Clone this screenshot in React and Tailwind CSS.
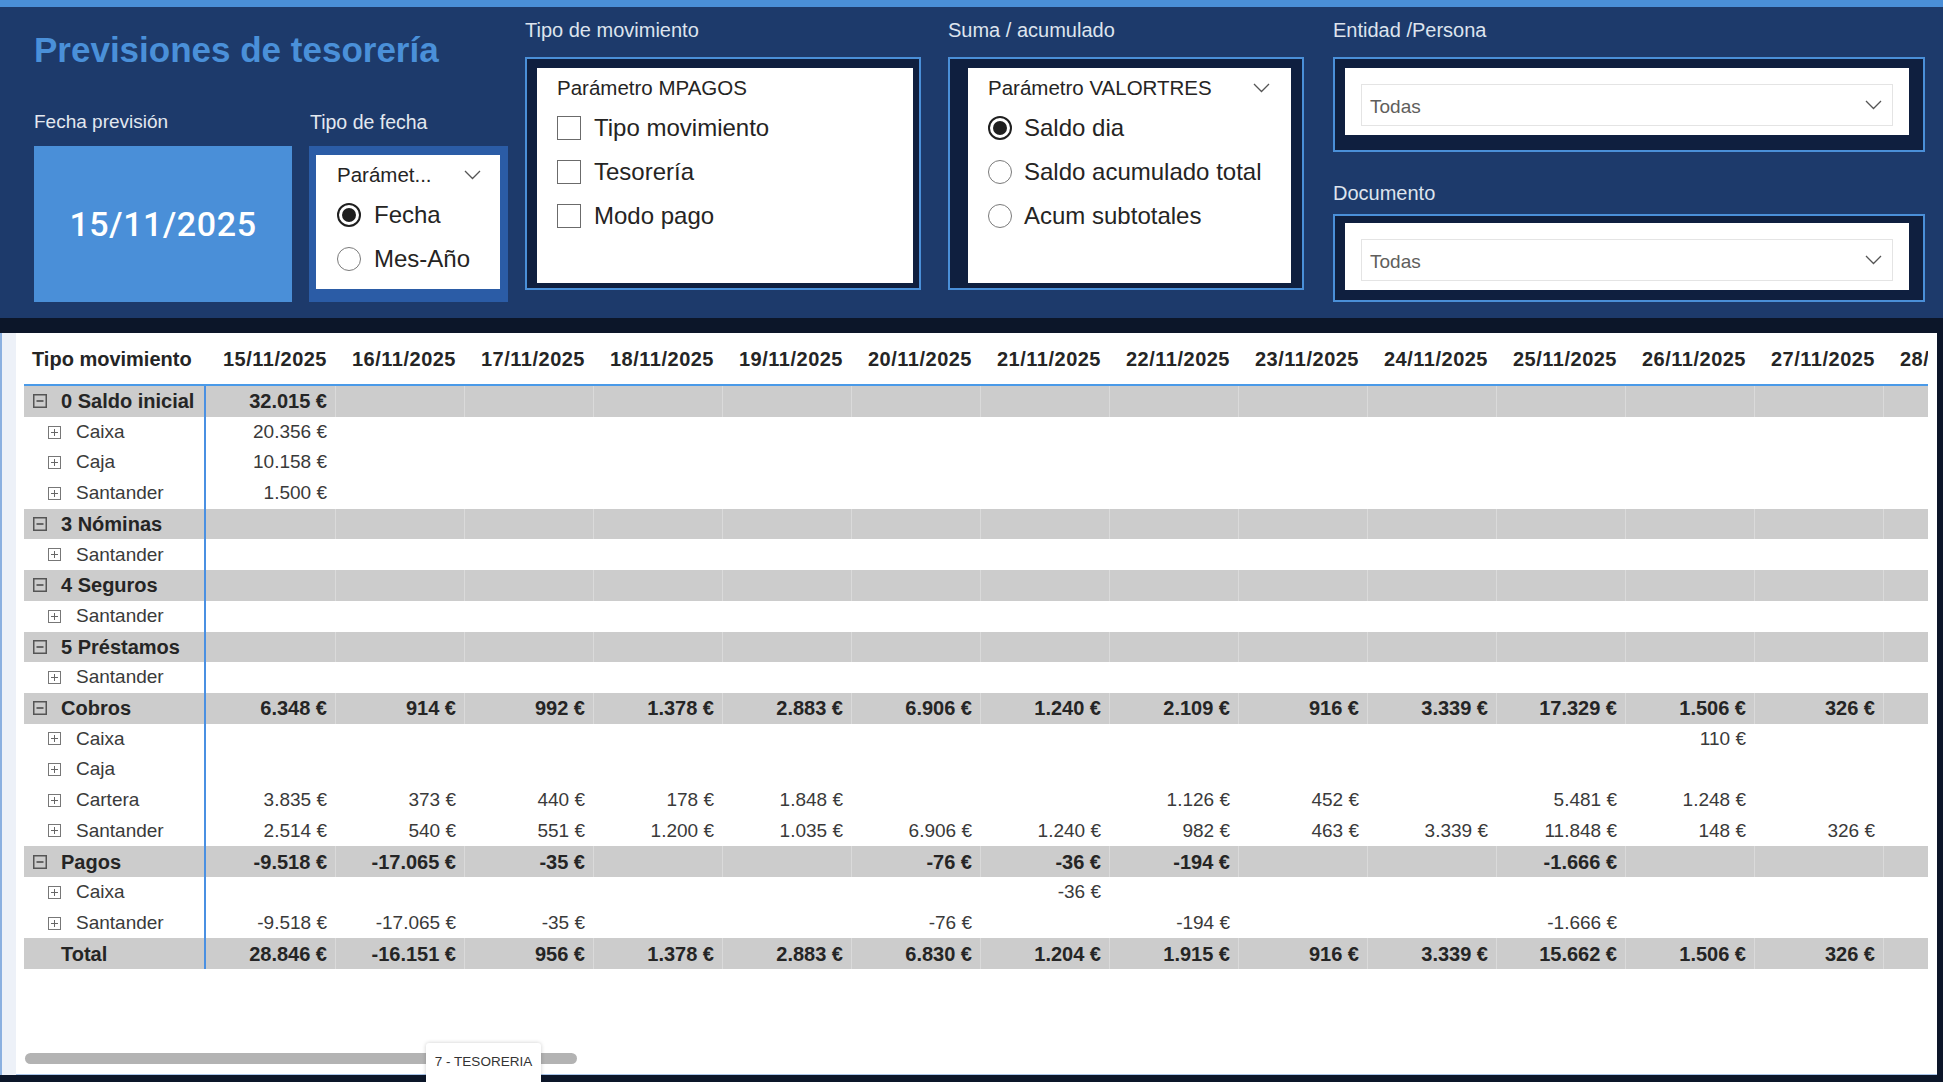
import React from 'react';

const dates = [
    '15/11/2025', '16/11/2025', '17/11/2025', '18/11/2025', '19/11/2025', '20/11/2025', '21/11/2025',
    '22/11/2025', '23/11/2025', '24/11/2025', '25/11/2025', '26/11/2025', '27/11/2025', '28/11/2025',
];

const rows = [
    { label: '0 Saldo inicial', type: 'group', values: ['32.015 €'] },
    { label: 'Caixa', type: 'child', values: ['20.356 €'] },
    { label: 'Caja', type: 'child', values: ['10.158 €'] },
    { label: 'Santander', type: 'child', values: ['1.500 €'] },
    { label: '3 Nóminas', type: 'group', values: [] },
    { label: 'Santander', type: 'child', values: [] },
    { label: '4 Seguros', type: 'group', values: [] },
    { label: 'Santander', type: 'child', values: [] },
    { label: '5 Préstamos', type: 'group', values: [] },
    { label: 'Santander', type: 'child', values: [] },
    { label: 'Cobros', type: 'group', values: ['6.348 €', '914 €', '992 €', '1.378 €', '2.883 €', '6.906 €', '1.240 €', '2.109 €', '916 €', '3.339 €', '17.329 €', '1.506 €', '326 €'] },
    { label: 'Caixa', type: 'child', values: ['', '', '', '', '', '', '', '', '', '', '', '110 €'] },
    { label: 'Caja', type: 'child', values: [] },
    { label: 'Cartera', type: 'child', values: ['3.835 €', '373 €', '440 €', '178 €', '1.848 €', '', '', '1.126 €', '452 €', '', '5.481 €', '1.248 €'] },
    { label: 'Santander', type: 'child', values: ['2.514 €', '540 €', '551 €', '1.200 €', '1.035 €', '6.906 €', '1.240 €', '982 €', '463 €', '3.339 €', '11.848 €', '148 €', '326 €'] },
    { label: 'Pagos', type: 'group', values: ['-9.518 €', '-17.065 €', '-35 €', '', '', '-76 €', '-36 €', '-194 €', '', '', '-1.666 €'] },
    { label: 'Caixa', type: 'child', values: ['', '', '', '', '', '', '-36 €'] },
    { label: 'Santander', type: 'child', values: ['-9.518 €', '-17.065 €', '-35 €', '', '', '-76 €', '', '-194 €', '', '', '-1.666 €'] },
    { label: 'Total', type: 'total', values: ['28.846 €', '-16.151 €', '956 €', '1.378 €', '2.883 €', '6.830 €', '1.204 €', '1.915 €', '916 €', '3.339 €', '15.662 €', '1.506 €', '326 €'] },
];

function Chevron() {
    return (
        <svg width="17" height="10" viewBox="0 0 17 10" className="shrink-0">
            <polyline points="1,1 8.5,8.5 16,1" fill="none" stroke="#555" strokeWidth="1.3" />
        </svg>
    );
}

function Radio({ checked }) {
    return (
        <span
            className={`w-[24px] h-[24px] rounded-full flex items-center justify-center shrink-0 ${checked ? 'border-2 border-[#1f1f1f]' : 'border-[1.5px] border-[#7a7a7a]'}`}
        >
            {checked && <span className="w-[14px] h-[14px] rounded-full bg-[#1f1f1f]" />}
        </span>
    );
}

function Checkbox() {
    return <span className="w-[24px] h-[24px] border-[1.5px] border-[#6b6b6b] shrink-0" />;
}

function ExpandIcon({ plus }) {
    if (plus) {
        return (
            <svg width="13" height="13" viewBox="0 0 13 13" className="shrink-0">
                <rect x="0.5" y="0.5" width="12" height="12" fill="none" stroke="#777" />
                <line x1="3" y1="6.5" x2="10" y2="6.5" stroke="#666" />
                <line x1="6.5" y1="3" x2="6.5" y2="10" stroke="#666" />
            </svg>
        );
    }
    return (
        <svg width="14" height="14" viewBox="0 0 14 14" className="shrink-0">
            <rect x="0.75" y="0.75" width="12.5" height="12.5" fill="none" stroke="#555" strokeWidth="1.5" />
            <line x1="3.5" y1="7" x2="10.5" y2="7" stroke="#444" strokeWidth="1.5" />
        </svg>
    );
}

function Label({ children, className = '' }) {
    return <div className={`h-[24px] leading-[24px] text-[20px] text-[#dde4ee] whitespace-nowrap ${className}`}>{children}</div>;
}

function Dropdown() {
    return (
        <div className="h-full border border-[#e4e4e4] flex items-center justify-between pl-[8px] pr-[10px]">
            <span className="pt-[5px] text-[19px] text-[#605e5c]">Todas</span>
            <Chevron />
        </div>
    );
}

function TableRow({ row }) {
    const gray = row.type !== 'child';
    const bold = row.type !== 'child';
    return (
        <div className={`flex h-[30.7px] ${gray ? 'bg-[#cccccc]' : ''} ${bold ? 'font-bold text-[20px] text-[#252525]' : 'text-[19px] text-[#3a3a3a]'}`}>
            <div className={`w-[182px] shrink-0 border-r-2 border-[#4a90e2] flex items-center whitespace-nowrap ${row.type === 'child' ? 'pl-[24px] gap-[15px]' : 'pl-[9px] gap-[14px]'}`}>
                {row.type === 'group' && <ExpandIcon />}
                {row.type === 'child' && <ExpandIcon plus />}
                {row.type === 'total' && <span className="w-[14px]" />}
                <span>{row.label}</span>
            </div>
            {dates.map((d, i) => (
                <div
                    key={d}
                    className={`w-[129px] shrink-0 flex items-center justify-end pr-[8px] whitespace-nowrap ${gray && i > 0 ? 'border-l border-[#dadada]' : ''}`}
                >
                    {row.values[i] || ''}
                </div>
            ))}
        </div>
    );
}

export default function App() {
    return (
        <div className="relative w-[1943px] h-[1082px] overflow-hidden bg-[#0c1629] font-['Liberation_Sans',Arial,sans-serif]">
            <div className="h-[7px] bg-[#4a8fd8]" />

            {/* header with slicers */}
            <div className="h-[311px] bg-[#1d3a6b] flex pl-[34px]">
                <div className="w-[474px] shrink-0 flex flex-col">
                    <h1 className="mt-[23px] h-[40px] leading-[40px] text-[35px] font-bold text-[#4a90d9] whitespace-nowrap">
                        Previsiones de tesorería
                    </h1>
                    <div className="mt-[40px] flex gap-[17px]">
                        <div className="w-[258px] shrink-0">
                            <div className="h-[24px] leading-[24px] text-[19px] text-[#e3e8f0]">Fecha previsión</div>
                            <div className="mt-[12px] h-[156px] bg-[#4a8fd8] flex items-center justify-center text-white text-[34px] font-medium font-['Roboto',sans-serif] tracking-[0.6px]">
                                15/11/2025
                            </div>
                        </div>
                        <div className="w-[199px] shrink-0">
                            <div className="h-[24px] leading-[24px] text-[19.5px] text-[#e3e8f0] pl-[1px]">Tipo de fecha</div>
                            <div className="mt-[12px] h-[156px] bg-[#2b5ca6] pt-[9px] pl-[7px] pr-[8px] pb-[13px]">
                                <div className="h-full bg-white pl-[21px] pr-[19px] text-[#252423]">
                                    <div className="h-[38px] pt-[2px] flex items-center justify-between text-[20.5px]">
                                        <span>Parámet...</span>
                                        <Chevron />
                                    </div>
                                    <div className="h-[44px] flex items-center gap-[13px] text-[24px]">
                                        <Radio checked />
                                        <span>Fecha</span>
                                    </div>
                                    <div className="h-[44px] flex items-center gap-[13px] text-[24px]">
                                        <Radio />
                                        <span>Mes-Año</span>
                                    </div>
                                </div>
                            </div>
                        </div>
                    </div>
                </div>

                <div className="ml-[17px] w-[396px] shrink-0">
                    <Label className="mt-[11px]">Tipo de movimiento</Label>
                    <div className="mt-[15px] h-[233px] border-2 border-[#4a8fd8] bg-[#0f1f3f] pl-[10px] pt-[9px] pr-[6px] pb-[5px]">
                        <div className="h-full bg-white pl-[20px] text-[#252423]">
                            <div className="h-[38px] pt-[2px] flex items-center text-[20.5px]">Parámetro MPAGOS</div>
                            {['Tipo movimiento', 'Tesorería', 'Modo pago'].map((t) => (
                                <div key={t} className="h-[44px] flex items-center gap-[13px] text-[24px]">
                                    <Checkbox />
                                    <span>{t}</span>
                                </div>
                            ))}
                        </div>
                    </div>
                </div>

                <div className="ml-[27px] w-[356px] shrink-0">
                    <Label className="mt-[11px]">Suma / acumulado</Label>
                    <div className="mt-[15px] h-[233px] border-2 border-[#4a8fd8] bg-[#0f1f3f] pl-[18px] pt-[9px] pr-[11px] pb-[5px]">
                        <div className="h-full bg-white pl-[20px] pr-[21px] text-[#252423]">
                            <div className="h-[38px] pt-[2px] flex items-center justify-between text-[20.5px]">
                                <span>Parámetro VALORTRES</span>
                                <Chevron />
                            </div>
                            {[['Saldo dia', true], ['Saldo acumulado total', false], ['Acum subtotales', false]].map(([t, c]) => (
                                <div key={t} className="h-[44px] flex items-center gap-[12px] text-[24px] whitespace-nowrap">
                                    <Radio checked={c} />
                                    <span>{t}</span>
                                </div>
                            ))}
                        </div>
                    </div>
                </div>

                <div className="ml-[29px] w-[592px] shrink-0">
                    <Label className="mt-[11px]">Entidad /Persona</Label>
                    <div className="mt-[15px] h-[95px] border-2 border-[#4a8fd8] bg-[#0f1f3f] pl-[10px] pt-[9px] pr-[14px] pb-[15px]">
                        <div className="h-full bg-white pt-[16px] pb-[9px] px-[16px]">
                            <Dropdown />
                        </div>
                    </div>
                    <Label className="mt-[29px]">Documento</Label>
                    <div className="mt-[9px] h-[88px] border-2 border-[#4a8fd8] bg-[#0f1f3f] pl-[10px] pt-[7px] pr-[14px] pb-[10px]">
                        <div className="h-full bg-white pt-[16px] pb-[9px] px-[16px]">
                            <Dropdown />
                        </div>
                    </div>
                </div>
            </div>

            <div className="h-[15px]" />

            {/* matrix */}
            <div className="flex h-[742px]">
                <div className="w-[16px] shrink-0 bg-[#edf1f8] border-l-2 border-[#8bb0e0]" />
                <div className="w-[1921px] shrink-0 bg-white flex flex-col pt-[6px] border-b border-[#a9c4e8]">
                    <div className="ml-[8px] w-[1904px] overflow-hidden">
                        <div className="flex h-[47px] border-b-2 border-[#4a9ae8] pt-[8px] font-bold text-[20px] text-[#252525] leading-[24px]">
                            <div className="w-[182px] shrink-0 pl-[8px] whitespace-nowrap">Tipo movimiento</div>
                            {dates.map((d) => (
                                <div key={d} className="w-[129px] shrink-0 text-right pr-[8px] tracking-[0.5px] whitespace-nowrap">
                                    {d}
                                </div>
                            ))}
                        </div>
                        {rows.map((r, i) => (
                            <TableRow key={i} row={r} />
                        ))}
                    </div>
                    <div className="mt-auto mb-[10px] ml-[9px] w-[552px] h-[11px] rounded-full bg-[#b3b3b3]" />
                </div>
            </div>

            <div className="absolute left-[426px] top-[1043px] w-[115px] h-[39px] bg-white rounded-t-[3px] shadow-[0_0_4px_rgba(0,0,0,0.2)] flex items-center justify-center text-[13.5px] text-[#333]">
                7 - TESORERIA
            </div>
        </div>
    );
}
